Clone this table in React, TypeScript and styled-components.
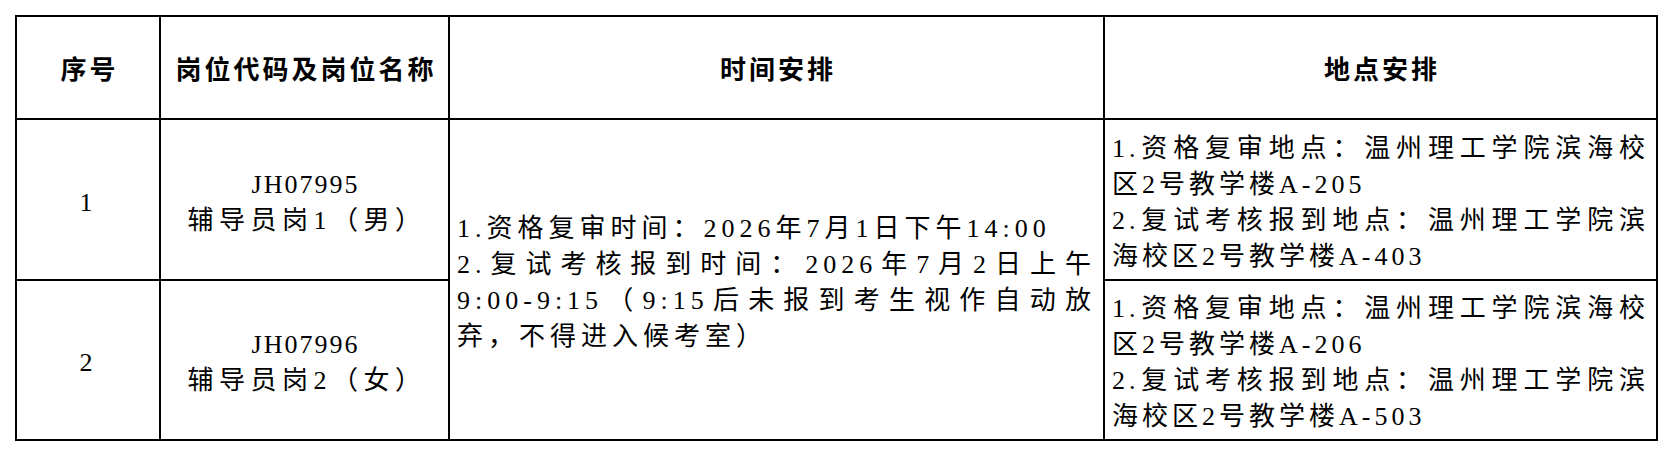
import React from "react";
import styled, { createGlobalStyle } from "styled-components";

const GlobalStyle = createGlobalStyle`
  body {
    margin: 0;
    background: #fff;
    font-family: "Liberation Serif", "Noto Sans CJK SC", serif;
    color: #000;
  }
`;

const Sheet = styled.table`
  margin: 15px 0 0 15px;
  width: 1643px;
  border-collapse: collapse;
  table-layout: fixed;
`;

const Col = styled.col<{ $w: number }>`
  width: ${(p) => p.$w}px;
`;

const Row = styled.tr<{ $h: number }>`
  height: ${(p) => p.$h}px;
`;

const Head = styled.th`
  border: 2px solid #000;
  padding: 0 0 0 3px;
  text-align: center;
  vertical-align: middle;
  font-family: "Noto Sans CJK SC", sans-serif;
  font-size: 26px;
  font-weight: 700;
  letter-spacing: 3px;
`;

const Cell = styled.td<{ $align?: "left" | "center"; $spacing?: number }>`
  border: 2px solid #000;
  padding: 6px 7px 0;
  text-align: ${(p) => p.$align ?? "left"};
  vertical-align: middle;
  font-size: 26px;
  line-height: 36px;
  letter-spacing: ${(p) => p.$spacing ?? 4}px;
  overflow: hidden;
`;

const Line = styled.div<{ $justify?: boolean }>`
  white-space: nowrap;
  ${(p) =>
    p.$justify &&
    `
    text-align: justify;
    text-align-last: justify;
  `}
`;

// post code is set tighter than the name under it
const Code = styled(Line)`
  letter-spacing: 2px;
  padding-left: 2px;
`;

const Name = styled(Line)`
  letter-spacing: 5.5px;
  padding-left: 5px;
`;

const posts = [
  {
    no: "1",
    code: "JH07995",
    name: "辅导员岗1（男）",
    place: [
      { text: "1.资格复审地点：温州理工学院滨海校", justify: true },
      { text: "区2号教学楼A-205" },
      { text: "2.复试考核报到地点：温州理工学院滨", justify: true },
      { text: "海校区2号教学楼A-403" },
    ],
  },
  {
    no: "2",
    code: "JH07996",
    name: "辅导员岗2（女）",
    place: [
      { text: "1.资格复审地点：温州理工学院滨海校", justify: true },
      { text: "区2号教学楼A-206" },
      { text: "2.复试考核报到地点：温州理工学院滨", justify: true },
      { text: "海校区2号教学楼A-503" },
    ],
  },
];

const timeLines = [
  { text: "1.资格复审时间：2026年7月1日下午14:00" },
  { text: "2.复试考核报到时间：2026年7月2日上午", justify: true },
  { text: "9:00-9:15（9:15后未报到考生视作自动放", justify: true },
  { text: "弃，不得进入候考室）" },
];

const App: React.FC = () => {
  return (
    <>
      <GlobalStyle />
      <Sheet>
        <colgroup>
          <Col $w={144} />
          <Col $w={289} />
          <Col $w={655} />
          <Col $w={553} />
        </colgroup>
        <thead>
          <Row $h={103}>
            <Head>序号</Head>
            <Head>岗位代码及岗位名称</Head>
            <Head>时间安排</Head>
            <Head>地点安排</Head>
          </Row>
        </thead>
        <tbody>
          {posts.map((post, i) => (
            <Row $h={i === 0 ? 161 : 160} key={post.code}>
              <Cell $align="center">{post.no}</Cell>
              <Cell $align="center">
                <Code>{post.code}</Code>
                <Name>{post.name}</Name>
              </Cell>
              {i === 0 && (
                <Cell rowSpan={2} $spacing={5}>
                  {timeLines.map((l) => (
                    <Line $justify={l.justify} key={l.text}>
                      {l.text}
                    </Line>
                  ))}
                </Cell>
              )}
              <Cell>
                {post.place.map((l) => (
                  <Line $justify={l.justify} key={l.text}>
                    {l.text}
                  </Line>
                ))}
              </Cell>
            </Row>
          ))}
        </tbody>
      </Sheet>
    </>
  );
};

export default App;
